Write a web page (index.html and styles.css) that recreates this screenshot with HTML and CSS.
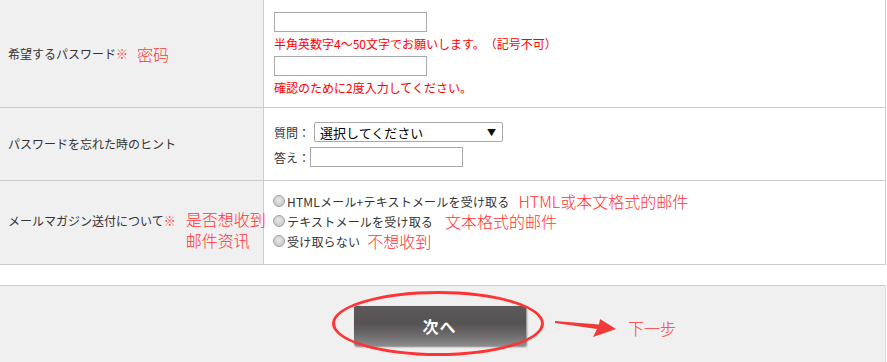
FILE: index.html
```html
<!DOCTYPE html>
<html lang="ja">
<head>
<meta charset="utf-8">
<title>会員登録</title>
<link rel="stylesheet" href="styles.css">
</head>
<body>
<div class="form">
  <div class="head r1"><span>希望するパスワード</span><span class="mark">※</span><span class="note note-inline">密码</span></div>
  <div class="cell r1 pw">
    <input class="txt" type="password">
    <p class="hint">半角英数字4～50文字でお願いします。（記号不可）</p>
    <input class="txt" type="password">
    <p class="hint">確認のために2度入力してください。</p>
  </div>

  <div class="head r2"><span>パスワードを忘れた時のヒント</span></div>
  <div class="cell r2 hintq">
    <div class="line"><span class="lbl">質問：</span><div class="sel"><span>選択してください</span><span class="arr">▼</span></div></div>
    <div class="line"><span class="lbl">答え：</span><input class="txt ans" type="text"></div>
  </div>

  <div class="head r3"><span>メールマガジン送付について</span><span class="mark">※</span><span class="note note-block"><span class="nl">是否想收到</span><span class="nl">邮件资讯</span></span></div>
  <div class="cell r3 mail">
    <label class="opt"><input class="rad" type="radio" name="mg"><span>HTMLメール+テキストメールを受け取る</span><span class="note n1">HTML或本文格式的邮件</span></label>
    <label class="opt"><input class="rad" type="radio" name="mg"><span>テキストメールを受け取る</span><span class="note n2">文本格式的邮件</span></label>
    <label class="opt"><input class="rad" type="radio" name="mg"><span>受け取らない</span><span class="note n3">不想收到</span></label>
  </div>
</div>

<div class="foot">
  <button class="next" type="button">次へ</button>
  <div class="ring"></div>
  <svg class="arrow" width="64" height="24" viewBox="0 0 64 24"><polygon points="0,5 44,8.5 45,3 61,13 38,21 42,13 0,7" fill="#f03a3a"/></svg>
  <span class="next-note">下一步</span>
</div>
</body>
</html>
```

FILE: styles.css
```css
* { box-sizing: border-box; }
html, body { margin: 0; padding: 0; background: #fff; }
body {
  font-family: "Noto Sans CJK JP", "Noto Sans", sans-serif;
  font-size: 12px;
  color: #333;
  width: 887px;
  height: 362px;
  overflow: hidden;
  text-spacing-trim: space-all;
}

.form {
  display: grid;
  grid-template-columns: 264px 1fr;
  grid-template-rows: 108px 73px 84px;
  width: 886px;
  border-right: 1px solid #ccc;
}
.head {
  background: #f0f0f0;
  border-right: 1px solid #ccc;
  border-bottom: 1px solid #ccc;
  padding-left: 8px;
  display: flex;
  align-items: center;
  line-height: 18px;
  white-space: nowrap;
}
.cell {
  border-bottom: 1px solid #ccc;
  padding: 0 10px;
  display: flex;
  flex-direction: column;
  align-items: flex-start;
}
.mark { color: #f44; }
.note {
  color: #f33;
  font-family: "Noto Sans CJK SC", sans-serif;
  font-size: 16px;
  font-weight: 300;
}
.note-inline { margin-left: 9px; }
.head.r3 { align-items: flex-start; padding-top: 31px; }
.note-block {
  margin-left: 10px;
  margin-top: -3px;
  display: flex;
  flex-direction: column;
  gap: 1px;
}
.nl { display: block; line-height: 20px; height: 20px; }

.txt {
  width: 153px;
  height: 20px;
  border: 1px solid #a9a9a9;
  border-radius: 0;
  padding: 0 3px;
  margin: 0;
  background: #fff;
  font: inherit;
}
.pw { padding-top: 12px; }
.hint {
  margin: 0;
  color: #f00;
  line-height: 24px;
}

.hintq { padding-top: 13px; gap: 3px; }
.line { display: flex; align-items: center; height: 22px; }
.lbl { margin-right: 4px; }
.sel {
  width: 189px;
  height: 20px;
  border: 1px solid #a9a9a9;
  border-radius: 2px;
  display: flex;
  align-items: center;
  justify-content: space-between;
  padding: 0 6px 0 5px;
  font-size: 13px;
  color: #000;
  background: #fff;
}
.arr { font-size: 9px; color: #111; }
.ans { width: 153px; margin-left: -4px; }

.mail { padding-top: 10px; padding-left: 9px; }
.opt { display: flex; align-items: center; height: 20px; white-space: nowrap; }
.rad {
  appearance: none;
  -webkit-appearance: none;
  width: 12px;
  height: 12px;
  margin: 0 2px 0 0;
  border: 1px solid #a3a3a3;
  border-radius: 50%;
  background: radial-gradient(circle at 50% 40%, #e8e8e8 0%, #d0d0d0 60%, #bdbdbd 100%);
}
.opt > span:nth-child(2) { letter-spacing: 0.2px; }
.n1 { margin-left: 9px; }
.n2 { margin-left: 12px; }
.n3 { margin-left: 7px; }

.foot {
  position: relative;
  margin-top: 20px;
  width: 886px;
  height: 77px;
  background: #f0f0f0;
  border-top: 1px solid #ccc;
  border-right: 1px solid #ddd;
  display: flex;
  justify-content: center;
  padding: 20px 0 0 0;
}
.next {
  width: 172px;
  height: 40px;
  margin-left: -6px;
  border: none;
  border-radius: 2px;
  background: linear-gradient(to bottom, #5b5959 0%, #555353 45%, #6a6868 70%, #8c8c8c 100%);
  box-shadow: 1px 1px 2px rgba(0, 0, 0, 0.45);
  color: #fff;
  font-family: "Noto Sans CJK JP", sans-serif;
  font-size: 16px;
  font-weight: bold;
  letter-spacing: 1px;
}
.ring {
  position: absolute;
  left: 332px;
  top: 5px;
  width: 212px;
  height: 65px;
  border: 3px solid #f33;
  border-radius: 50%;
}
.arrow { position: absolute; left: 555px; top: 30px; }
.next-note {
  position: absolute;
  left: 628px;
  top: 32px;
  color: #f33;
  font-family: "Noto Sans CJK SC", sans-serif;
  font-size: 16px;
  line-height: 20px;
  font-weight: 300;
}
```
